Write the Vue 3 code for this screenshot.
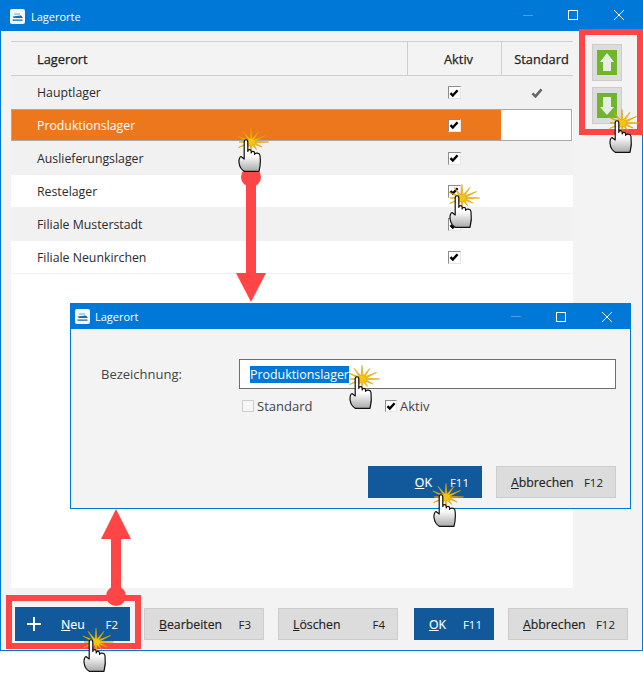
<script setup>
const rows = [
  { name: 'Hauptlager', tone: 'grey', standard: true },
  { name: 'Produktionslager', tone: 'active' },
  { name: 'Auslieferungslager', tone: 'grey' },
  { name: 'Restelager', tone: 'white' },
  { name: 'Filiale Musterstadt', tone: 'grey' },
  { name: 'Filiale Neunkirchen', tone: 'white' }
]

const hands = [
  { x: 246, y: 140 },
  { x: 457, y: 196 },
  { x: 617, y: 121 },
  { x: 357, y: 377 },
  { x: 441, y: 495 },
  { x: 91, y: 640 }
]

const spikes = [22, 5, 16, 5, 14, 5, 18, 5, 16, 5, 18, 5, 15, 5, 19, 5, 20, 5, 22, 5, 20, 5, 21, 5]
const burst = spikes
  .map((r, i) => {
    const a = (i / spikes.length) * Math.PI * 2
    const x = 21 + Math.cos(a) * r * 0.8
    const y = 14 + Math.sin(a) * r * 0.62
    return x.toFixed(1) + ',' + y.toFixed(1)
  })
  .join(' ')

const handStyle = (h) => ({ left: h.x - 16 + 'px', top: h.y - 12 + 'px' })
</script>

<template>
  <div class="page">
    <section class="window">
      <header class="titlebar">
        <svg class="appicon" viewBox="0 0 15 15">
          <rect x="0" y="0" width="15" height="15" rx="2" fill="#f4f8fb" />
          <path d="M4 4.5h6v1H4z" fill="#5fa8dc" />
          <path d="M2.5 7.5L11 6.5l2 2.5H4zM2.5 10.5h10v1.2h-10z" fill="#1c6aa8" />
        </svg>
        <span class="title">Lagerorte</span>
        <span class="controls">
          <i class="min"></i>
          <i class="max"></i>
          <svg class="close" viewBox="0 0 10 10"><path d="M0 0l10 10M10 0L0 10" stroke="#fff" stroke-width="1" /></svg>
        </span>
      </header>

      <div class="main">
        <div class="list">
          <div class="row head">
            <div class="cell name">Lagerort</div>
            <div class="cell mid sep">Aktiv</div>
            <div class="cell mid sep">Standard</div>
          </div>
          <div v-for="r in rows" :key="r.name" class="row" :class="r.tone">
            <div class="cell name">{{ r.name }}</div>
            <div class="cell mid">
              <span class="box">
                <svg viewBox="0 0 10 10"><path d="M1.5 5.2l2.3 2.4 4.8-5.4" fill="none" stroke="#000" stroke-width="2.4" /></svg>
              </span>
            </div>
            <div class="cell mid std">
              <svg v-if="r.standard" class="tick" viewBox="0 0 12 10"><path d="M1.5 5.4l3 3 6-7" fill="none" stroke="#666" stroke-width="2.6" /></svg>
            </div>
          </div>
        </div>
        <div class="side">
          <button class="move">
            <span class="arrowicon">
              <svg viewBox="0 0 20 25"><path d="M10 3l7 9h-3v9H6v-9H3z" fill="#e9ede6" /></svg>
            </span>
          </button>
          <button class="move">
            <span class="arrowicon">
              <svg viewBox="0 0 20 25"><path d="M10 22l7-8h-3V4H6v10H3z" fill="#e9ede6" /></svg>
            </span>
          </button>
        </div>
      </div>

      <footer class="footer">
        <button class="btn primary neu">
          <svg class="plus" viewBox="0 0 14 14"><path d="M7 0v14M0 7h14" stroke="#fff" stroke-width="2" /></svg>
          <span class="lbl"><u>N</u>eu</span><span class="key">F2</span>
        </button>
        <button class="btn w120"><span class="lbl"><u>B</u>earbeiten</span><span class="key">F3</span></button>
        <button class="btn w120"><span class="lbl"><u>L</u>öschen</span><span class="key">F4</span></button>
        <button class="btn primary w80 okmain"><span class="lbl"><u>O</u>K</span><span class="key">F11</span></button>
        <button class="btn w120"><span class="lbl"><u>A</u>bbrechen</span><span class="key">F12</span></button>
      </footer>
    </section>

    <section class="dialog">
      <header class="titlebar small">
        <svg class="appicon" viewBox="0 0 15 15">
          <rect x="0" y="0" width="15" height="15" rx="2" fill="#f4f8fb" />
          <path d="M4 4.5h6v1H4z" fill="#5fa8dc" />
          <path d="M2.5 7.5L11 6.5l2 2.5H4zM2.5 10.5h10v1.2h-10z" fill="#1c6aa8" />
        </svg>
        <span class="title">Lagerort</span>
        <span class="controls">
          <i class="min"></i>
          <i class="max"></i>
          <svg class="close" viewBox="0 0 10 10"><path d="M0 0l10 10M10 0L0 10" stroke="#fff" stroke-width="1" /></svg>
        </span>
      </header>
      <div class="form">
        <div class="field">
          <label class="flabel">Bezeichnung:</label>
          <div class="input"><span class="sel">Produktionslager</span></div>
        </div>
        <div class="checks">
          <span class="check first"><span class="box off"></span>Standard</span>
          <span class="check">
            <span class="box">
              <svg viewBox="0 0 10 10"><path d="M1.5 5.2l2.3 2.4 4.8-5.4" fill="none" stroke="#000" stroke-width="2.4" /></svg>
            </span>Aktiv
          </span>
        </div>
        <div class="dlgbtns">
          <button class="btn primary dlgok"><span class="lbl"><u>O</u>K</span><span class="key">F11</span></button>
          <button class="btn w120"><span class="lbl"><u>A</u>bbrechen</span><span class="key">F12</span></button>
        </div>
      </div>
    </section>

    <i class="frame frame-side"></i>
    <i class="frame frame-neu"></i>

    <svg class="arrows" width="643" height="673" viewBox="0 0 643 673">
      <g fill="#ff4545">
        <circle cx="251" cy="177" r="10" />
        <rect x="246" y="177" width="10" height="97" />
        <path d="M236 273h30l-15 29z" />
        <circle cx="116" cy="596" r="10" />
        <rect x="111" y="538" width="10" height="58" />
        <path d="M101 539h30l-15-30z" />
      </g>
    </svg>

    <svg v-for="(h, i) in hands" :key="i" class="hand" :style="handStyle(h)" width="42" height="46" viewBox="0 0 42 46">
      <defs>
        <linearGradient :id="'g' + i" x1="0" y1="0" x2="0" y2="1">
          <stop offset="0.5" stop-color="#ffffff" />
          <stop offset="1" stop-color="#a8a8a8" />
        </linearGradient>
      </defs>
      <polygon :points="burst" fill="#f7c511" stroke="#d99c00" stroke-width="0.6" />
      <path
        d="M14.2 14C14.2 11 17.8 11 17.8 14V23.5C18 21 21 21 21.2 23.5V25C21.5 22.8 24.4 22.8 24.6 25V26.5C25 24.6 29.5 24.6 30 27.5C30.6 32 30.4 38 29 43.4H14.5C12 42 9.5 39 9 34.5C8.7 31.5 9.8 28.8 11 28.5L14.2 31Z"
        :fill="'url(#g' + i + ')'"
        stroke="#111"
        stroke-width="1.2"
        stroke-linejoin="round"
      />
    </svg>
  </div>
</template>

<style>
html, body { margin: 0; background: #fff; }
</style>

<style scoped>
.page {
  position: relative;
  width: 643px;
  height: 673px;
  overflow: hidden;
  background: #fff;
  font-family: "Open Sans", "Noto Sans", sans-serif;
  font-size: 12.3px;
  color: #2b2b2b;
}
.window {
  box-sizing: border-box;
  width: 643px;
  height: 651px;
  border: 1px solid #0078d7;
  background: #f3f3f3;
  display: flex;
  flex-direction: column;
}
.titlebar {
  flex: none;
  height: 30px;
  background: #0078d7;
  color: #fff;
  display: flex;
  align-items: center;
  padding-left: 9px;
  gap: 6px;
}
.title { font-size: 11px; }
.appicon { width: 15px; height: 15px; }
.controls {
  margin-left: auto;
  display: flex;
  align-items: center;
  margin-right: 18px;
  margin-bottom: 2px;
}
.min { width: 10px; height: 1px; background: #4da0e3; margin-right: 35px; }
.max { box-sizing: border-box; width: 10px; height: 10px; border: 1px solid #fff; margin-right: 36px; }
.close { width: 10px; height: 10px; }

.main { flex: 1; display: flex; min-height: 0; }
.list {
  width: 562px;
  margin: 10px 0 0 10px;
  background: #fff;
  display: flex;
  flex-direction: column;
}
.row {
  display: grid;
  grid-template-columns: 396px 94px 72px;
  height: 33px;
  align-items: stretch;
}
.head {
  background: #f3f3f3;
  border-top: 1px solid #cfcfcf;
  border-bottom: 1px solid #cfcfcf;
  font-size: 12.8px;
  -webkit-text-stroke: 0.25px #222;
  color: #222;
  box-sizing: content-box;
  height: 33px;
}
.cell { display: flex; align-items: center; min-width: 0; }
.name { padding-left: 26px; }
.mid { justify-content: center; }
.sep { border-left: 1px solid #cfcfcf; padding-left: 8px; }
.grey { background: #f1f1f1; }
.white { background: #fff; border-bottom: 1px solid #f1f1f1; box-sizing: border-box; }
.active {
  grid-template-columns: 395px 94px 70px;
  background: #ed771d;
  color: #fff;
  box-sizing: border-box;
  height: 32px;
  margin-right: 1px;
  border: 1px solid #a9a9a9;
}
.active .name { padding-left: 25px; }
.active .std { background: #fff; }
.row.grey:nth-child(4) { height: 34px; }
.box {
  box-sizing: border-box;
  display: inline-flex;
  align-items: center;
  justify-content: center;
  width: 13px;
  height: 13px;
  background: #fff;
  border: 1px solid;
  border-color: #8c8c8c #e6e6e6 #e6e6e6 #8c8c8c;
}
.box svg { width: 10px; height: 10px; }
.box.off { border-color: #cdcdcd; background: #f6f6f6; }
.tick { width: 12px; height: 10px; }

.side {
  flex: 1;
  display: flex;
  flex-direction: column;
  gap: 6px;
  padding: 13px 0 0 19px;
}
.move {
  box-sizing: border-box;
  width: 30px;
  height: 37px;
  padding: 0;
  background: #dcdcdc;
  border: 1px solid #cdcdcd;
  display: flex;
  align-items: center;
  justify-content: center;
}
.arrowicon { width: 20px; height: 25px; background: #70b62c; display: block; }
.arrowicon svg { display: block; width: 20px; height: 25px; }

.footer {
  flex: none;
  height: 62px;
  display: flex;
  align-items: center;
  padding-left: 14px;
  gap: 14px;
  box-sizing: border-box;
  padding-top: 10px;
}
.btn {
  box-sizing: border-box;
  height: 32px;
  font: inherit;
  color: #222;
  background: #dcdcdc;
  border: 1px solid #cdcdcd;
  display: flex;
  align-items: center;
  justify-content: space-between;
  padding: 0 12px 0 14px;
  white-space: nowrap;
}
.lbl { -webkit-text-stroke: 0.15px currentColor; }
.w120 { width: 120px; }
.w80 { width: 80px; }
.okmain { margin-left: 2px; padding-right: 11px; }
.primary { background: #12599b; border-color: #12599b; color: #fff; }
.neu { width: 115px; height: 34px; padding: 0 11px; justify-content: flex-start; }
.plus { width: 14px; height: 14px; margin-right: 20px; }
.neu .key { margin-left: auto; }
.key { font-size: 11.5px; }

.dialog {
  position: absolute;
  left: 70px;
  top: 303px;
  box-sizing: border-box;
  width: 561px;
  height: 206px;
  border: 1px solid #0078d7;
  background: #f3f3f3;
  display: flex;
  flex-direction: column;
}
.small { height: 25px; padding-left: 4px; gap: 5px; }
.small .controls { margin-right: 18px; margin-bottom: 0; }
.form {
  flex: 1;
  display: flex;
  flex-direction: column;
  padding: 30px 14px 10px 30px;
}
.field { display: flex; align-items: center; }
.flabel { width: 138px; color: #444; font-size: 13px; }
.input {
  flex: 1;
  box-sizing: border-box;
  height: 30px;
  background: #fff;
  border: 1px solid #6e6e6e;
  display: flex;
  align-items: center;
  padding-left: 10px;
}
.sel { background: #0078d7; color: #fff; line-height: 17px; font-size: 12.4px; }
.checks {
  display: flex;
  margin: 8px 0 0 141px;
  color: #444;
  font-size: 13px;
}
.check { display: flex; align-items: center; gap: 3px; }
.check .box { width: 12px; height: 12px; }
.first { width: 143px; }
.dlgbtns {
  margin-top: auto;
  display: flex;
  justify-content: flex-end;
  gap: 14px;
}
.dlgok { width: 114px; justify-content: flex-end; gap: 18px; }

.frame {
  position: absolute;
  box-sizing: border-box;
  border: 6px solid #ff4545;
  pointer-events: none;
}
.frame-side { left: 579px; top: 29px; width: 64px; height: 106px; }
.frame-neu { left: 6px; top: 595px; width: 135px; height: 54px; }
.arrows { position: absolute; left: 0; top: 0; pointer-events: none; }
.hand { position: absolute; pointer-events: none; }
</style>
